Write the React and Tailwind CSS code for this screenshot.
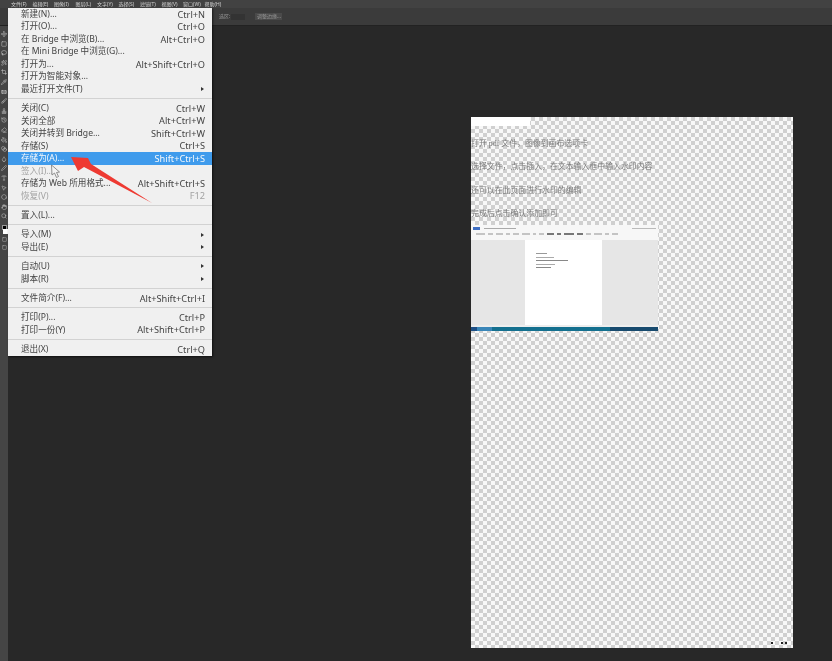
import {
  Move, Square, Lasso, Wand2, Crop, Pipette, Bandage, Brush, Stamp, History, Eraser,
  PaintBucket, Blend, Droplet, Pen, Type, MousePointer2, Hexagon, Hand, Search,
} from 'lucide-react'

const MENU_BAR = ['文件(F)', '编辑(E)', '图像(I)', '图层(L)', '文字(Y)', '选择(S)', '滤镜(T)', '视图(V)', '窗口(W)', '帮助(H)']

const TOOLS = [Move, Square, Lasso, Wand2, Crop, Pipette, Bandage, Brush, Stamp, History, Eraser, PaintBucket, Blend, Droplet, Pen, Type, MousePointer2, Hexagon, Hand, Search]

const FILE_MENU = [
  [
    { label: '新建(N)...', keys: 'Ctrl+N' },
    { label: '打开(O)...', keys: 'Ctrl+O' },
    { label: '在 Bridge 中浏览(B)...', keys: 'Alt+Ctrl+O' },
    { label: '在 Mini Bridge 中浏览(G)...' },
    { label: '打开为...', keys: 'Alt+Shift+Ctrl+O' },
    { label: '打开为智能对象...' },
    { label: '最近打开文件(T)', sub: true },
  ],
  [
    { label: '关闭(C)', keys: 'Ctrl+W' },
    { label: '关闭全部', keys: 'Alt+Ctrl+W' },
    { label: '关闭并转到 Bridge...', keys: 'Shift+Ctrl+W' },
    { label: '存储(S)', keys: 'Ctrl+S' },
    { label: '存储为(A)...', keys: 'Shift+Ctrl+S', active: true },
    { label: '签入(I)...', disabled: true },
    { label: '存储为 Web 所用格式...', keys: 'Alt+Shift+Ctrl+S' },
    { label: '恢复(V)', keys: 'F12', disabled: true },
  ],
  [{ label: '置入(L)...' }],
  [
    { label: '导入(M)', sub: true },
    { label: '导出(E)', sub: true },
  ],
  [
    { label: '自动(U)', sub: true },
    { label: '脚本(R)', sub: true },
  ],
  [{ label: '文件简介(F)...', keys: 'Alt+Shift+Ctrl+I' }],
  [
    { label: '打印(P)...', keys: 'Ctrl+P' },
    { label: '打印一份(Y)', keys: 'Alt+Shift+Ctrl+P' },
  ],
  [{ label: '退出(X)', keys: 'Ctrl+Q' }],
]

const DOC_LINES = [
  '打开 pdf 文件，图像到画布选项卡',
  '选择文件，点击插入，在文本输入框中输入水印内容',
  '还可以在此页面进行水印的编辑',
  '完成后点击确认添加即可',
]

const RIBBON_TOOLS = [9, 5, 7, 4, 6, 8, 3, 5, 7, 4, 10, 6, 5, 8, 4, 6]

function MenuRow({ item }) {
  let color = 'text-[#444444]'
  if (item.active) color = 'bg-[#3f9bec] text-[#f4f8fc]'
  if (item.disabled) color = 'text-[#a2a2a2]'
  return (
    <div className={`flex h-[12.5px] items-center justify-between pl-[13px] pr-[7px] leading-none ${color}`}>
      <span className="whitespace-nowrap text-[8.6px]">{item.label}</span>
      {item.keys && <span className="whitespace-nowrap text-[9.2px]">{item.keys}</span>}
      {item.sub && <span className="mr-px h-0 w-0 border-y-[2.5px] border-l-[3px] border-y-transparent border-l-[#333]" />}
    </div>
  )
}

function FileMenu() {
  return (
    <div className="absolute left-2 top-2 w-[204px] bg-[#f0f0f0] shadow-[1px_1px_2px_rgba(0,0,0,0.6)] blur-[0.4px]">
      {FILE_MENU.map((group, i) => (
        <div key={i}>
          {i > 0 && (
            <div className="flex h-[6.8px] items-center">
              <div className="h-px w-full bg-[#d2d2d2]" />
            </div>
          )}
          {group.map((item) => (
            <MenuRow key={item.label} item={item} />
          ))}
        </div>
      ))}
    </div>
  )
}

function WordShot() {
  return (
    <div className="flex h-[106px] w-[187px] flex-col bg-[#e6e6e6] blur-[0.5px]">
      <div className="h-[15px] bg-[#f7f7f7] px-0.5 pt-0.5">
        <div className="flex items-center gap-1">
          <div className="h-[3px] w-[7px] bg-[#3f6fc4]" />
          <div className="h-px w-8 bg-[#aaa]" />
          <div className="ml-auto h-px w-6 bg-[#bbb]" />
        </div>
        <div className="mt-[3px] flex items-center gap-[3px] pl-[3px]">
          {RIBBON_TOOLS.map((w, i) => (
            <div key={i} className={`h-[2px] ${i > 7 && i < 12 ? 'bg-[#777]' : 'bg-[#c4c4c4]'}`} style={{ width: w }} />
          ))}
        </div>
      </div>
      <div className="flex flex-1 justify-center">
        <div className="mr-[2px] flex h-[85px] w-[77px] flex-col gap-[2.5px] bg-white pl-[11px] pt-[13px]">
          <div className="h-px w-[11px] bg-[#999]" />
          <div className="h-px w-[18px] bg-[#aaa]" />
          <div className="h-px w-[32px] bg-[#888]" />
          <div className="h-px w-[19px] bg-[#aaa]" />
          <div className="h-px w-[15px] bg-[#888]" />
        </div>
      </div>
      <div className="h-[2px] bg-[#eeeeee]" />
      <div className="flex h-1 bg-[#14708f]">
        <div className="w-[6px] bg-[#1d4f86]" />
        <div className="w-[15px] bg-[#3a86b8]" />
        <div className="ml-auto w-[48px] bg-[#174a6e]" />
      </div>
    </div>
  )
}

function Document() {
  return (
    <div className="ml-[463px] mt-[91px] flex h-[531px] w-[322px] flex-col bg-[repeating-conic-gradient(#d0d0d0_0%_25%,#f8f8f8_0%_50%)] bg-[length:8px_8px]">
      <div className="h-[9px] w-[59px] bg-white" />
      <div className="h-[99px] font-['Liberation_Serif','Noto_Sans_CJK_SC',serif] text-[7.9px] leading-[8px] text-[#7c7c7c] blur-[0.6px]">
        {DOC_LINES.map((line, i) => (
          <p key={line} className={`whitespace-nowrap ${i === 0 ? 'mt-[14px]' : 'mt-[15.3px]'}`}>
            {line}
          </p>
        ))}
      </div>
      <WordShot />
      <div className="mt-auto flex justify-end gap-[2px] pb-[4px] pr-[6px]">
        <div className="mr-[6px] size-[2px] bg-[#222]" />
        <div className="size-[2px] bg-[#222]" />
        <div className="size-[2px] bg-[#222]" />
      </div>
    </div>
  )
}

export default function App() {
  return (
    <div className="relative flex h-[661px] w-[832px] flex-col overflow-hidden bg-[#282828] font-['Noto_Sans','Noto_Sans_CJK_SC',sans-serif]">
      <div className="flex h-2 items-center bg-[#424242] pl-[11px] text-[5px] leading-none text-[#d0d0d0] blur-[0.3px]">
        {MENU_BAR.map((name) => (
          <span key={name} className="w-[21.5px] whitespace-nowrap">{name}</span>
        ))}
      </div>

      <div className="flex h-[18px] items-center border-b border-[#222] bg-[#3b3b3b] pl-[219px] text-[5px] leading-none text-[#999] blur-[0.3px]">
        <span className="w-3">选区:</span>
        <span className="h-[6px] w-[14px] bg-[#333]" />
        <span className="ml-[10px] w-[27px] whitespace-nowrap bg-[#4a4a4a] px-0.5 py-[1px]">调整边缘...</span>
      </div>

      <div className="flex flex-1">
        <div className="flex w-2 flex-col items-center bg-[#454545] pt-[5px] text-[#c8c8c8]">
          {TOOLS.map((Icon, i) => (
            <Icon key={i} size={6} strokeWidth={2} className="mb-[3.6px]" />
          ))}
          <div className="mt-[2px] size-[5px] border border-[#999] bg-black" />
          <div className="-mt-px ml-[2px] size-[5px] bg-white" />
          <Square size={5} className="mt-[3px]" />
          <Square size={5} className="mt-[3px]" />
        </div>
        <div className="flex-1">
          <Document />
        </div>
      </div>

      <FileMenu />

      {/* annotation arrow + mouse pointer on top of the menu */}
      <svg className="absolute left-0 top-0" width="832" height="661" viewBox="0 0 832 661">
        <polygon points="71,157 88,158 91,164 152,203 84,167 78,171" fill="#ee3a32" />
        <path d="M51.5 165 L52 175 L54.5 173 L56.5 177.5 L58.5 176.5 L56.5 172.5 L59.5 172 Z" fill="#f4f4f4" stroke="#777" strokeWidth="0.8" />
      </svg>
    </div>
  )
}
